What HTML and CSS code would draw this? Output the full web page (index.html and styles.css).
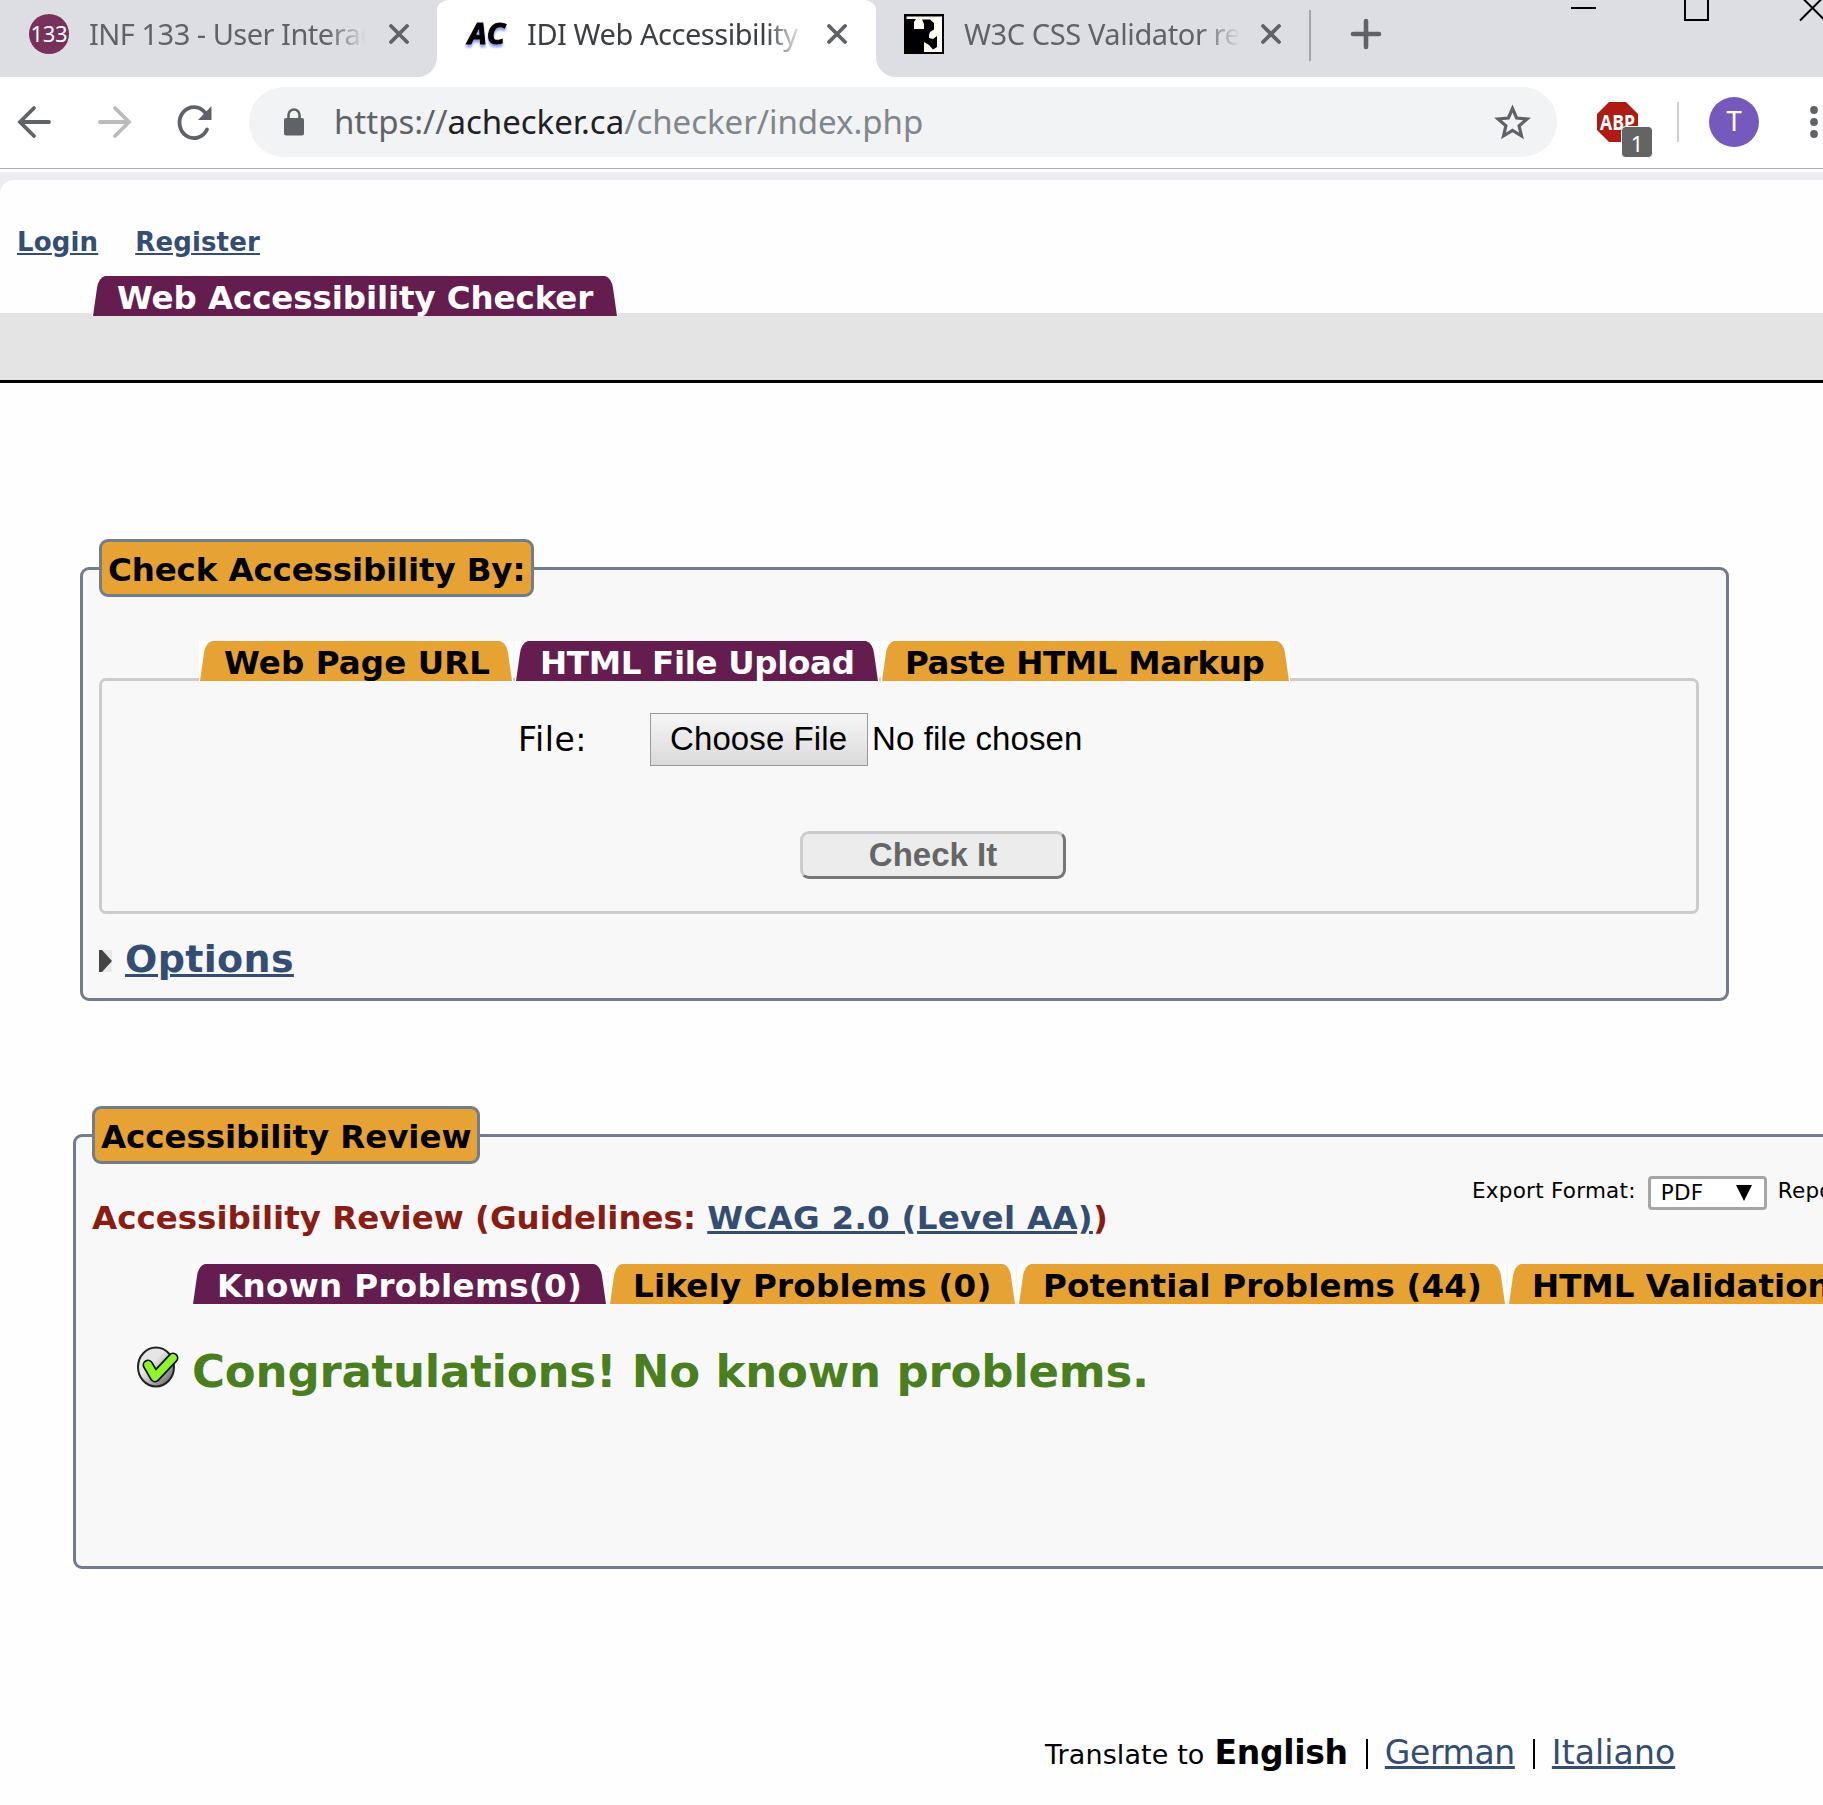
FILE: index.html
```html
<!DOCTYPE html>
<html lang="en">
<head>
<meta charset="utf-8">
<title>IDI Web Accessibility Checker</title>
<link rel="stylesheet" href="styles.css">
</head>
<body>
<svg width="0" height="0" class="defs" aria-hidden="true">
  <symbol id="x" viewBox="0 0 20 20"><path d="M2 2 18 18M18 2 2 18" stroke="#5f6368" stroke-width="3.8" stroke-linecap="round"/></symbol>
  <symbol id="edge" viewBox="0 0 14 40"><path d="M1 40 5 12Q6.500 2 13 0H14V40Z" fill="currentColor"/></symbol>
</svg>
<div class="strip">
  <div class="btab first">
    <svg class="fav" width="40" height="40" viewBox="0 0 40 40"><circle cx="20" cy="20" r="20" fill="#77315b"/><text x="20" y="28" text-anchor="middle" textLength="37" class="favnum">133</text></svg>
    <span class="btitle"><span class="t t1">INF 133 - User Interac</span></span>
    <svg class="bx" width="20" height="20"><use href="#x"/></svg>
  </div>
  <div class="btab active">
    <svg class="fav" width="40" height="40" viewBox="0 0 40 40"><text x="1" y="30" textLength="37" lengthAdjust="spacingAndGlyphs" class="ac">AC</text></svg>
    <span class="btitle"><span class="t t2">IDI Web Accessibility</span></span>
    <svg class="bx" width="20" height="20"><use href="#x"/></svg>
  </div>
  <div class="btab last">
    <svg class="fav" width="40" height="40" viewBox="0 0 40 40"><path d="M0 0H40V40H0Z"/><path fill="#fffff4" d="M2.500 2.500H38V38H20V27L24 24 26 18 30 15.500V9L26 5.500H18L20 10V15H10V8L12 5H2.500Z"/><path d="M19 17H25V24L29 25 33 22V33L29 35.500 25 31 20 28Z"/></svg>
    <span class="btitle"><span class="t t3">W3C CSS Validator re</span></span>
    <svg class="bx" width="20" height="20"><use href="#x"/></svg>
    <i class="tsep"></i>
    <svg class="plus" width="30" height="30" viewBox="0 0 30 30"><path d="M15 2V28M2 15H28" stroke="#5f6368" stroke-width="4.600" stroke-linecap="round"/></svg>
    <svg class="win" width="252" height="24" viewBox="0 0 252 24" fill="none" stroke="#000" stroke-width="2"><path d="M0 8H25M114 -6V20H137V-6M229 -4.500 254 20.500M254 -4.500 229 20.500"/></svg>
  </div>
</div>
<div class="toolbar">
  <svg class="nav" width="200" height="36" viewBox="0 0 200 36" fill="none" stroke-width="3.800" stroke-linecap="round"><path d="M31 18H3M16 4 2 18 16 32" stroke="#5f6368"/><path d="M82 18H110M97 4 111 18 97 32" stroke="#babcbe"/><path d="M189 25.500A14.500 15.500 0 1 1 187 8.500" stroke="#5f6368"/><path d="M193.500 2V16H180Z" fill="#5f6368"/></svg>
  <div class="omni">
    <svg width="20" height="28" viewBox="0 0 20 28"><rect y="10" width="20" height="17.500" rx="2" fill="#5f6368"/><path d="M4.500 11V7A5.500 5.500 0 0 1 15.500 7V11" fill="none" stroke="#5f6368" stroke-width="2.600"/></svg>
    <span class="url t">https://<b>achecker.ca</b><em>/checker/index.php</em></span>
    <svg class="star" width="37" height="36" viewBox="0 0 37 36"><path d="M18.500 4.500 22.600 14 33 15 25.100 21.800 27.500 32 18.500 26.500 9.500 32 11.900 21.800 4 15 14.400 14Z" fill="none" stroke="#5f6368" stroke-width="3.200"/></svg>
  </div>
  <svg class="abp" width="56" height="56" viewBox="0 0 56 56"><path d="M12 0H29L41 12V28L29 40H12L0 28V12Z" fill="#ad1b12"/><text x="3" y="27.500" textLength="35" lengthAdjust="spacingAndGlyphs" class="abpt">ABP</text><rect x="24.500" y="24.500" width="31" height="31" rx="4" fill="#646464" stroke="#fff"/><text x="40" y="50" text-anchor="middle" class="one">1</text></svg>
  <i class="vsep"></i>
  <span class="avatar">T</span>
  <svg class="dots" width="8" height="34" viewBox="0 0 8 34" fill="#5f6368"><circle cx="4" cy="5" r="3.900"/><circle cx="4" cy="17" r="3.900"/><circle cx="4" cy="29" r="3.900"/></svg>
</div>
<div class="page">
  <div class="login"><a class="t l1">Login</a><a class="t l2">Register</a></div>
  <div class="mainnav"><div class="tab on w0"><svg><use href="#edge"/></svg><span><b class="t k0">Web Accessibility Checker</b></span><svg class="r"><use href="#edge"/></svg></div></div>
  <div class="graybar"></div>

  <section class="panel p1">
    <h2 class="legend"><span class="t g1">Check Accessibility By:</span></h2>
    <div class="tabs">
      <div class="tab w1"><svg><use href="#edge"/></svg><span><b class="t k1">Web Page URL</b></span><svg class="r"><use href="#edge"/></svg></div>
      <div class="tab on w2"><svg><use href="#edge"/></svg><span><b class="t k2">HTML File Upload</b></span><svg class="r"><use href="#edge"/></svg></div>
      <div class="tab w3"><svg><use href="#edge"/></svg><span><b class="t k3">Paste HTML Markup</b></span><svg class="r"><use href="#edge"/></svg></div>
    </div>
    <div class="box">
      <div class="filerow"><span class="flabel"><span class="t f1">File:</span></span><span class="choose"><span class="t f2">Choose File</span></span><span class="t f3">No file chosen</span></div>
      <div class="check"><span class="t f4">Check It</span></div>
    </div>
    <div class="options"><svg width="13" height="22" viewBox="0 0 13 22"><path d="M0 0H13V22H0Z" fill="#e8e8ea"/><path d="M0 0H3L13 11 3 22H0Z" fill="#444"/></svg><a class="t o1">Options</a></div>
  </section>

  <section class="panel p2">
    <h2 class="legend"><span class="t g2">Accessibility Review</span></h2>
    <div class="rhead">
      <h3><span class="t h1">Accessibility Review (Guidelines: </span><a class="t h2">WCAG 2.0 (Level AA)</a>)</h3>
      <div class="export"><span class="t e1">Export Format:</span><span class="select"><span class="t e2">PDF</span><svg width="16" height="16" viewBox="0 0 16 16"><path d="M0 0H16L8 16Z"/></svg></span><span class="e3">Report</span></div>
    </div>
    <div class="tabs">
      <div class="tab on w4"><svg><use href="#edge"/></svg><span><b class="t k4">Known Problems(0)</b></span><svg class="r"><use href="#edge"/></svg></div>
      <div class="tab w5"><svg><use href="#edge"/></svg><span><b class="t k5">Likely Problems (0)</b></span><svg class="r"><use href="#edge"/></svg></div>
      <div class="tab w6"><svg><use href="#edge"/></svg><span><b class="t k6">Potential Problems (44)</b></span><svg class="r"><use href="#edge"/></svg></div>
      <div class="tab w7"><svg><use href="#edge"/></svg><span><b class="t k7">HTML Validation</b></span></div>
    </div>
    <div class="congrats">
      <svg width="41" height="41" viewBox="0 0 41 41"><defs><linearGradient id="g" x1="0" y1="0" x2="1" y2="1"><stop offset=".4" stop-color="#e6e6e6"/><stop offset="1" stop-color="#555"/></linearGradient></defs><ellipse cx="19" cy="21" rx="18" ry="19.500" fill="url(#g)" stroke="#222" stroke-width="2"/><path d="M11 19 18 31 36 12" fill="none" stroke="#111" stroke-width="11" stroke-linejoin="round" stroke-linecap="round"/><path d="M11 19 18 31 36 12" fill="none" stroke="#8df52c" stroke-width="7.500" stroke-linejoin="round" stroke-linecap="round"/></svg>
      <span class="t c1">Congratulations! No known problems.</span>
    </div>
  </section>

  <div class="foot"><span class="t z1">Translate to</span><b class="t z2">English</b><i></i><a class="t z3">German</a><i></i><a class="t z4">Italiano</a></div>
</div>
</body>
</html>
```
FILE: styles.css
```css
* { box-sizing: border-box; }
html, body { margin: 0; background: #fefefe; }
body { width: 1823px; height: 1805px; overflow: hidden; position: relative; font-family: "DejaVu Sans", sans-serif; color: #000; background: linear-gradient(#ebedf0, #ebedf0) 0 170px / 16px 30px no-repeat #fefefe; }
svg { display: block; flex: none; overflow: visible; }
.defs { position: absolute; }
.t { white-space: nowrap; flex: none; }
a { color: #344d72; text-decoration: underline; }

/* browser tab strip */
.strip { display: flex; height: 77px; background: linear-gradient(#dddee4, #dddee4) 0 0 / 100% 20px no-repeat #fff; overflow: hidden; }
.btab { display: flex; height: 77px; flex: none; background: #dddee4; color: #5f6368; font: 29px/40px "Noto Sans", sans-serif; padding-top: 14px; }
.first { width: 437px; padding-left: 29px; border-bottom-right-radius: 20px; }
.active { width: 439px; padding-left: 30px; background: #fff; color: #3c4043; border-radius: 12px 12px 0 0 / 10px 10px 0 0; }
.last { width: 947px; padding-left: 28px; border-bottom-left-radius: 20px; }
.btitle { width: 277px; margin-left: 20px; overflow: hidden; white-space: nowrap; -webkit-mask-image: linear-gradient(90deg, #000 86%, transparent); mask-image: linear-gradient(90deg, #000 86%, transparent); }
.t1 { letter-spacing: -.5px; }
.t3 { letter-spacing: -.4px; }
.t2 { letter-spacing: -.45px; }
.bx { margin: 10px 0 0 23px; fill: none; }
.last .bx { margin-left: 21px; }
.favnum { font: 22px "Noto Sans", sans-serif; fill: #fff; }
.ac { font: italic bold 29px "Open Sans", sans-serif; fill: #000; stroke: #000; stroke-width: 1px; filter: drop-shadow(0 3px 1px #8ea0f0); }
.tsep { width: 2px; height: 51px; background: #a2a4a9; margin: -4px 0 0 28px; }
.plus { margin: 5px 0 0 40px; }
.win { margin: -14px 0 0 190px; }

/* address bar */
.toolbar { display: flex; height: 103px; padding-top: 10px; background: linear-gradient(#fff 91px, #aeaeb2 91px, #aeaeb2 92px, #fff 92px, #fff 95px, #ebedf0 95px); }
.nav { margin: 17px 0 0 18px; }
.omni { width: 1308px; height: 70px; margin-left: 31px; border-radius: 35px; background: #f1f3f4; display: flex; align-items: center; padding: 0 26px 0 35px; flex: none; }
.url { margin-left: 30px; font: 33px/70px "Noto Sans", sans-serif; letter-spacing: -.03px; color: #5f6368; }
.url b { font-weight: 400; color: #202124; }
.url em { font-style: normal; color: #80868b; }
.star { margin-left: auto; }
.abp { margin: 15px 0 0 40px; }
.abpt { font: bold 22px "Open Sans", sans-serif; fill: #fff; }
.one { font: 22px "Noto Sans", sans-serif; fill: #fff; }
.vsep { width: 2px; height: 40px; margin: 15px 0 0 24px; background: #cdcfd2; }
.avatar { width: 50px; height: 50px; border-radius: 50%; background: #7559bc; color: #fff; font: 27px/50px Roboto, sans-serif; text-align: center; margin: 10px 0 0 30px; }
.dots { margin: 18px 0 0 51px; }

/* page header */
.page { background: #fefefe; border-top-left-radius: 14px; height: 1625px; padding-top: 1px; }
.login { display: flex; height: 95px; padding: 46px 0 0 17px; font: bold 26px/30px "DejaVu Sans", sans-serif; letter-spacing: .15px; text-decoration-thickness: 2px; }
.l2 { margin-left: 37px; }
.mainnav { height: 37px; padding-left: 92px; }
.tab { display: flex; position: relative; flex: none; height: 40px; overflow: hidden; background: #fff; color: #e6a233; }
.tab.on { color: #651d4f; }
.tab svg { width: 14px; height: 40px; }
.tab .r { transform: scaleX(-1); }
.tab span { flex: 1; background: currentColor; height: 40px; padding-left: 11px; }
.tab b { color: #000; font: bold 32.5px/44px "DejaVu Sans", sans-serif; display: inline-block; }
.tab.on b { color: #fff; }
.tab .k0 { letter-spacing: -.1px; }
.tab .k1 { letter-spacing: .1px; }
.tab .k2, .tab .k3 { letter-spacing: -.33px; }
.tab .k4 { letter-spacing: .35px; }
.tab .k5 { letter-spacing: .25px; margin-left: -1px; }
.tab .k6 { letter-spacing: .13px; }
.tab .k3, .tab .k7 { margin-left: -1px; }
.graybar { height: 70px; background: #e4e4e4; border-bottom: 3px solid #000; }

/* panels */
.panel { background: #f8f8f8; border: 3px solid #737c8c; border-radius: 9px; }
.p1 { margin: 184px 0 0 80px; width: 1649px; height: 434px; padding: 0 27px 0 16px; }
.legend { width: max-content; margin: -31px 0 0; height: 58px; border: 3px solid #737c8c; border-radius: 9px; background: #e6a233; font: bold 32.5px/56px "DejaVu Sans", sans-serif; padding: 0 6px; }
.g1 { letter-spacing: -.14px; }
.g2 { letter-spacing: -.07px; }
.tabs { display: flex; gap: 2px; padding-left: 100px; margin-top: 44px; height: 37px; position: relative; }
.w0 { width: 526px; z-index: 1; }
.w1 { width: 314px; }
.w2 { width: 364px; }
.w3 { width: 409px; }
.w4 { width: 415px; }
.w5 { width: 407px; }
.w6 { width: 488px; }
.w7 { width: 400px; }
.box { height: 236px; border: 3px solid #ccc; border-radius: 7px; width: 1600px; }
.filerow { display: flex; padding: 32px 0 0 416px; font: 33px/53px "DejaVu Sans", sans-serif; }
.flabel { width: 132px; }
.f1 { letter-spacing: .5px; }
.choose { width: 218px; height: 53px; border: 1px solid #999; background: linear-gradient(#f6f6f6, #dadada); padding-left: 19px; line-height: 50px; }
.f2, .f3 { font-family: "Liberation Sans", sans-serif; letter-spacing: .1px; }
.f3 { margin-left: 4px; line-height: 52px; }
.check { width: 266px; height: 48px; margin: 65px 0 0 698px; border: 3px solid; border-color: #ccc #777 #777 #ccc; border-radius: 9px; background: #ececec; color: #666; text-align: center; font: bold 33px/41px "Liberation Sans", sans-serif; }
.options { display: flex; align-items: center; margin-top: 20px; font: bold 38px/50px "DejaVu Sans", sans-serif; gap: 13px; }
.options svg { margin-top: 4px; }
.o1 { text-decoration-thickness: 3px; letter-spacing: .35px; }

.p2 { margin: 133px 0 0 73px; width: 1800px; height: 435px; padding-left: 16px; }
.rhead { display: flex; height: 100px; }
h3 { margin: 30px 0 0; width: 1380px; flex: none; font: bold 32.5px/48px "DejaVu Sans", sans-serif; color: #8a1c14; white-space: pre; }
h3 a { text-decoration-thickness: 3px; letter-spacing: .29px; }
.export { display: flex; font: 21.500px/30px "DejaVu Sans", sans-serif; padding-top: 12px; letter-spacing: .25px; }
.e1 { line-height: 30px; }
.e1 + .select { margin-left: 12px; }
.select { width: 119px; height: 34px; border: 3px solid #a6a6a6; border-radius: 4px; background: #fff; display: flex; align-items: center; justify-content: space-between; padding: 0 12px 0 10px; line-height: 28px; }
.e3 { margin-left: 11px; line-height: 30px; }
.p2 .tabs { margin-top: 0; padding-left: 100px; height: 40px; }
.congrats { display: flex; margin: 42px 0 0 45px; gap: 14px; color: #4a7f20; font: bold 45px/51px "DejaVu Sans", sans-serif; letter-spacing: -.19px; }

/* language links */
.foot { display: flex; align-items: baseline; margin: 160px 0 0 1045px; font: 33px/48px "DejaVu Sans", sans-serif; }
.foot a { text-decoration-thickness: 3px; }
.foot i { width: 2px; height: 30px; background: #000; margin: 0 17px 0 18px; align-self: center; }
.z1 { font-size: 27px; letter-spacing: .1px; }
.z2 { margin-left: 10px; letter-spacing: -.3px; }
.z3 { letter-spacing: -.35px; }
.z4 { letter-spacing: .1px; }
```
